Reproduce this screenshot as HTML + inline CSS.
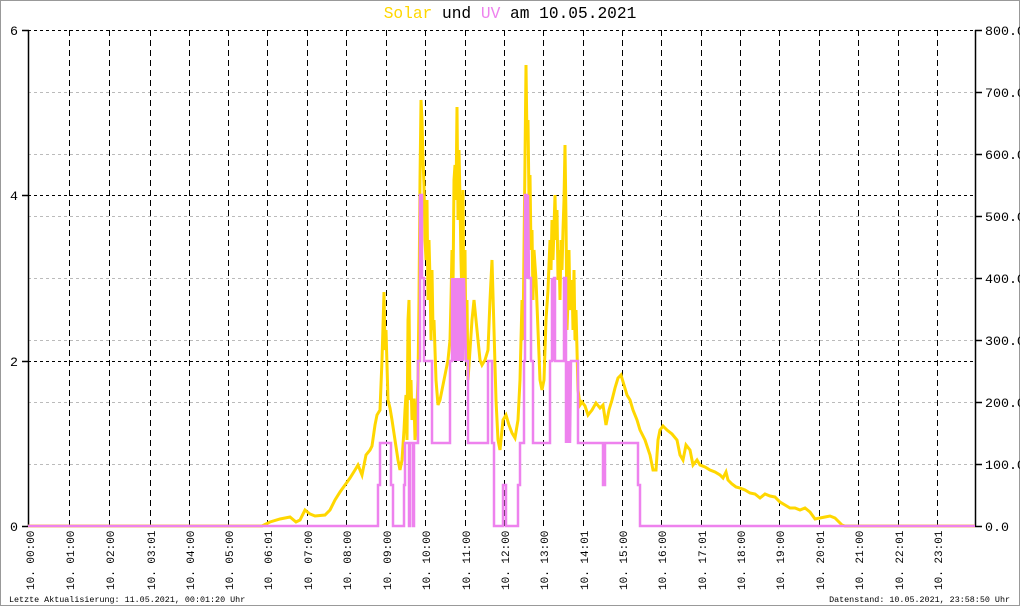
<!DOCTYPE html>
<html><head><meta charset="utf-8"><style>
html,body{margin:0;padding:0;background:#fff;}
svg{display:block;}
text{font-family:"Liberation Mono","DejaVu Sans Mono",monospace;}
</style></head><body>
<svg width="1020" height="606" viewBox="0 0 1020 606" xmlns="http://www.w3.org/2000/svg">
<rect x="0.5" y="0.5" width="1019" height="605" fill="#fff" stroke="#999" stroke-width="1"/>
<text x="510" y="18" font-size="16.2" text-anchor="middle"><tspan fill="#ffd700">Solar</tspan> <tspan fill="#000">und</tspan> <tspan fill="#ee82ee">UV</tspan> <tspan fill="#000">am 10.05.2021</tspan></text>
<g stroke="#bbb" stroke-width="1" stroke-dasharray="3,3">
<line x1="28" y1="92.5" x2="975" y2="92.5"/><line x1="28" y1="154.5" x2="975" y2="154.5"/><line x1="28" y1="216.5" x2="975" y2="216.5"/><line x1="28" y1="278.5" x2="975" y2="278.5"/><line x1="28" y1="340.5" x2="975" y2="340.5"/><line x1="28" y1="402.5" x2="975" y2="402.5"/><line x1="28" y1="464.5" x2="975" y2="464.5"/>
</g>
<g stroke="#000" stroke-width="1" stroke-dasharray="3,3">
<line x1="28" y1="30.5" x2="975" y2="30.5"/><line x1="28" y1="195.5" x2="975" y2="195.5"/><line x1="28" y1="361.5" x2="975" y2="361.5"/>
</g>
<g stroke="#000" stroke-width="1" stroke-dasharray="6,4">
<line x1="69.5" y1="30" x2="69.5" y2="526"/><line x1="109.5" y1="30" x2="109.5" y2="526"/><line x1="150.5" y1="30" x2="150.5" y2="526"/><line x1="189.5" y1="30" x2="189.5" y2="526"/><line x1="228.5" y1="30" x2="228.5" y2="526"/><line x1="267.5" y1="30" x2="267.5" y2="526"/><line x1="307.5" y1="30" x2="307.5" y2="526"/><line x1="346.5" y1="30" x2="346.5" y2="526"/><line x1="386.5" y1="30" x2="386.5" y2="526"/><line x1="425.5" y1="30" x2="425.5" y2="526"/><line x1="465.5" y1="30" x2="465.5" y2="526"/><line x1="504.5" y1="30" x2="504.5" y2="526"/><line x1="543.5" y1="30" x2="543.5" y2="526"/><line x1="583.5" y1="30" x2="583.5" y2="526"/><line x1="622.5" y1="30" x2="622.5" y2="526"/><line x1="661.5" y1="30" x2="661.5" y2="526"/><line x1="701.5" y1="30" x2="701.5" y2="526"/><line x1="740.5" y1="30" x2="740.5" y2="526"/><line x1="779.5" y1="30" x2="779.5" y2="526"/><line x1="819.5" y1="30" x2="819.5" y2="526"/><line x1="858.5" y1="30" x2="858.5" y2="526"/><line x1="898.5" y1="30" x2="898.5" y2="526"/><line x1="937.5" y1="30" x2="937.5" y2="526"/>
</g>
<g stroke="#000" stroke-width="1.5">
<line x1="28.5" y1="30" x2="28.5" y2="527"/><line x1="975.5" y1="30" x2="975.5" y2="527"/>
<line x1="22" y1="30.5" x2="29" y2="30.5"/><line x1="22" y1="195.5" x2="29" y2="195.5"/><line x1="22" y1="361.5" x2="29" y2="361.5"/><line x1="22" y1="526.5" x2="29" y2="526.5"/>
<line x1="975" y1="30.5" x2="982" y2="30.5"/><line x1="975" y1="92.5" x2="982" y2="92.5"/><line x1="975" y1="154.5" x2="982" y2="154.5"/><line x1="975" y1="216.5" x2="982" y2="216.5"/><line x1="975" y1="278.5" x2="982" y2="278.5"/><line x1="975" y1="340.5" x2="982" y2="340.5"/><line x1="975" y1="402.5" x2="982" y2="402.5"/><line x1="975" y1="464.5" x2="982" y2="464.5"/><line x1="975" y1="526.5" x2="982" y2="526.5"/>
</g>
<g font-size="13.3" fill="#000">
<text x="10" y="35">6</text><text x="10" y="200">4</text><text x="10" y="366">2</text><text x="10" y="531">0</text>
<text x="985" y="35">800.0</text><text x="985" y="97">700.0</text><text x="985" y="159">600.0</text><text x="985" y="221">500.0</text><text x="985" y="283">400.0</text><text x="985" y="345">300.0</text><text x="985" y="407">200.0</text><text x="985" y="469">100.0</text><text x="985" y="531">0.0</text>
</g>
<polyline fill="none" stroke="#ffd700" stroke-width="3" stroke-linejoin="miter" points="28,526 262,526 270,522 280,519 290,517 296,522 300,520 305,510 310,514 315,516 325,515 330,510 335,500 340,492 345,485 350,478 355,470 358,465 362,475 366,455 370,450 372,446 375,425 377,415 380,410 382,360 384,292 385,350 386,330 388,400 390,408 392,420 395,440 398,460 400,470 402,460 404,430 405,410 406,395 407,440 408,320 409,300 410,400 411,380 412,420 413,400 414,400 415,440 416,430 418,380 419,300 420,180 421,100 422,120 423,160 424,185 425,240 426,260 427,200 428,300 429,240 430,280 431,340 432,270 433,330 434,320 436,380 438,405 440,400 442,390 444,380 446,370 448,360 450,340 451,300 452,250 453,290 454,180 455,165 456,200 457,107 458,220 459,150 460,200 461,260 462,300 463,190 464,340 465,250 466,360 467,300 468,380 470,350 472,320 474,300 476,320 478,340 480,360 482,365 485,360 488,350 490,300 492,260 494,330 496,400 498,440 500,450 503,420 506,415 509,425 512,433 515,438 518,420 520,380 522,300 523,340 524,250 525,160 526,65 527,140 528,120 529,200 530,175 531,250 532,230 533,300 534,250 536,280 538,330 540,380 542,390 544,380 546,320 548,290 550,240 551,270 552,220 553,260 555,195 556,240 557,210 558,280 559,250 560,300 561,240 562,270 563,230 564,200 565,145 566,220 567,330 568,300 569,250 570,310 571,290 572,280 573,330 574,270 575,340 576,310 578,390 580,405 582,402 585,406 588,415 592,410 596,403 600,408 603,405 606,425 609,410 612,400 615,388 618,378 621,375 624,385 627,395 630,400 633,410 637,420 640,430 645,440 650,455 653,470 656,470 658,440 660,430 663,426 667,430 672,434 677,440 680,455 683,460 686,445 690,450 693,465 697,460 700,465 705,467 710,470 715,472 720,475 723,478 726,472 728,480 732,484 736,487 740,488 745,490 750,493 755,494 760,498 765,494 770,496 775,497 780,502 785,505 790,508 795,508 800,510 805,508 810,512 815,519 820,518 825,517 830,516 835,518 838,521 842,525 845,526 975,526"/>
<polyline fill="none" stroke="#ee82ee" stroke-width="2.5" points="28,526 378,526 378,485 380,485 380,443 391,443 391,485 393,485 393,526 404,526 404,485 405,485 405,443 409,443 409,526 410,526 410,443 413,443 413,526 414,526 414,443 418,443 418,361 420,361 420,195 422,195 422,278 424,278 424,361 432,361 432,443 450,443 450,361 452,361 452,278 453,361 454,278 455,361 456,278 457,361 458,278 459,361 460,278 461,361 462,278 463,361 464,278 466,361 468,361 468,443 488,443 488,361 492,361 492,443 494,443 494,526 503,526 503,485 506,485 506,526 518,526 518,485 520,485 520,443 524,443 524,361 525,361 525,195 527,195 527,278 528,195 529,278 531,278 531,361 533,361 533,443 550,443 550,361 552,361 552,278 553,361 554,278 555,278 555,361 564,361 564,278 566,278 566,443 567,361 568,443 569,361 570,443 571,361 572,361 578,361 578,443 603,443 603,485 605,485 605,443 638,443 638,485 640,485 640,526 975,526"/>
<g font-size="11" fill="#000">
<text transform="translate(34,590) rotate(-90)">10. 00:00</text>
<text transform="translate(74,590) rotate(-90)">10. 01:00</text>
<text transform="translate(114,590) rotate(-90)">10. 02:00</text>
<text transform="translate(155,590) rotate(-90)">10. 03:01</text>
<text transform="translate(194,590) rotate(-90)">10. 04:00</text>
<text transform="translate(233,590) rotate(-90)">10. 05:00</text>
<text transform="translate(272,590) rotate(-90)">10. 06:01</text>
<text transform="translate(312,590) rotate(-90)">10. 07:00</text>
<text transform="translate(351,590) rotate(-90)">10. 08:00</text>
<text transform="translate(391,590) rotate(-90)">10. 09:00</text>
<text transform="translate(430,590) rotate(-90)">10. 10:00</text>
<text transform="translate(470,590) rotate(-90)">10. 11:00</text>
<text transform="translate(509,590) rotate(-90)">10. 12:00</text>
<text transform="translate(548,590) rotate(-90)">10. 13:00</text>
<text transform="translate(588,590) rotate(-90)">10. 14:01</text>
<text transform="translate(627,590) rotate(-90)">10. 15:00</text>
<text transform="translate(666,590) rotate(-90)">10. 16:00</text>
<text transform="translate(706,590) rotate(-90)">10. 17:01</text>
<text transform="translate(745,590) rotate(-90)">10. 18:00</text>
<text transform="translate(784,590) rotate(-90)">10. 19:00</text>
<text transform="translate(824,590) rotate(-90)">10. 20:01</text>
<text transform="translate(863,590) rotate(-90)">10. 21:00</text>
<text transform="translate(903,590) rotate(-90)">10. 22:01</text>
<text transform="translate(942,590) rotate(-90)">10. 23:01</text>
</g>
<g font-size="8.4" fill="#000">
<text x="9" y="602">Letzte Aktualisierung: 11.05.2021, 00:01:20 Uhr</text>
<text x="1010" y="602" text-anchor="end">Datenstand: 10.05.2021, 23:58:50 Uhr</text>
</g>
</svg>
</body></html>
